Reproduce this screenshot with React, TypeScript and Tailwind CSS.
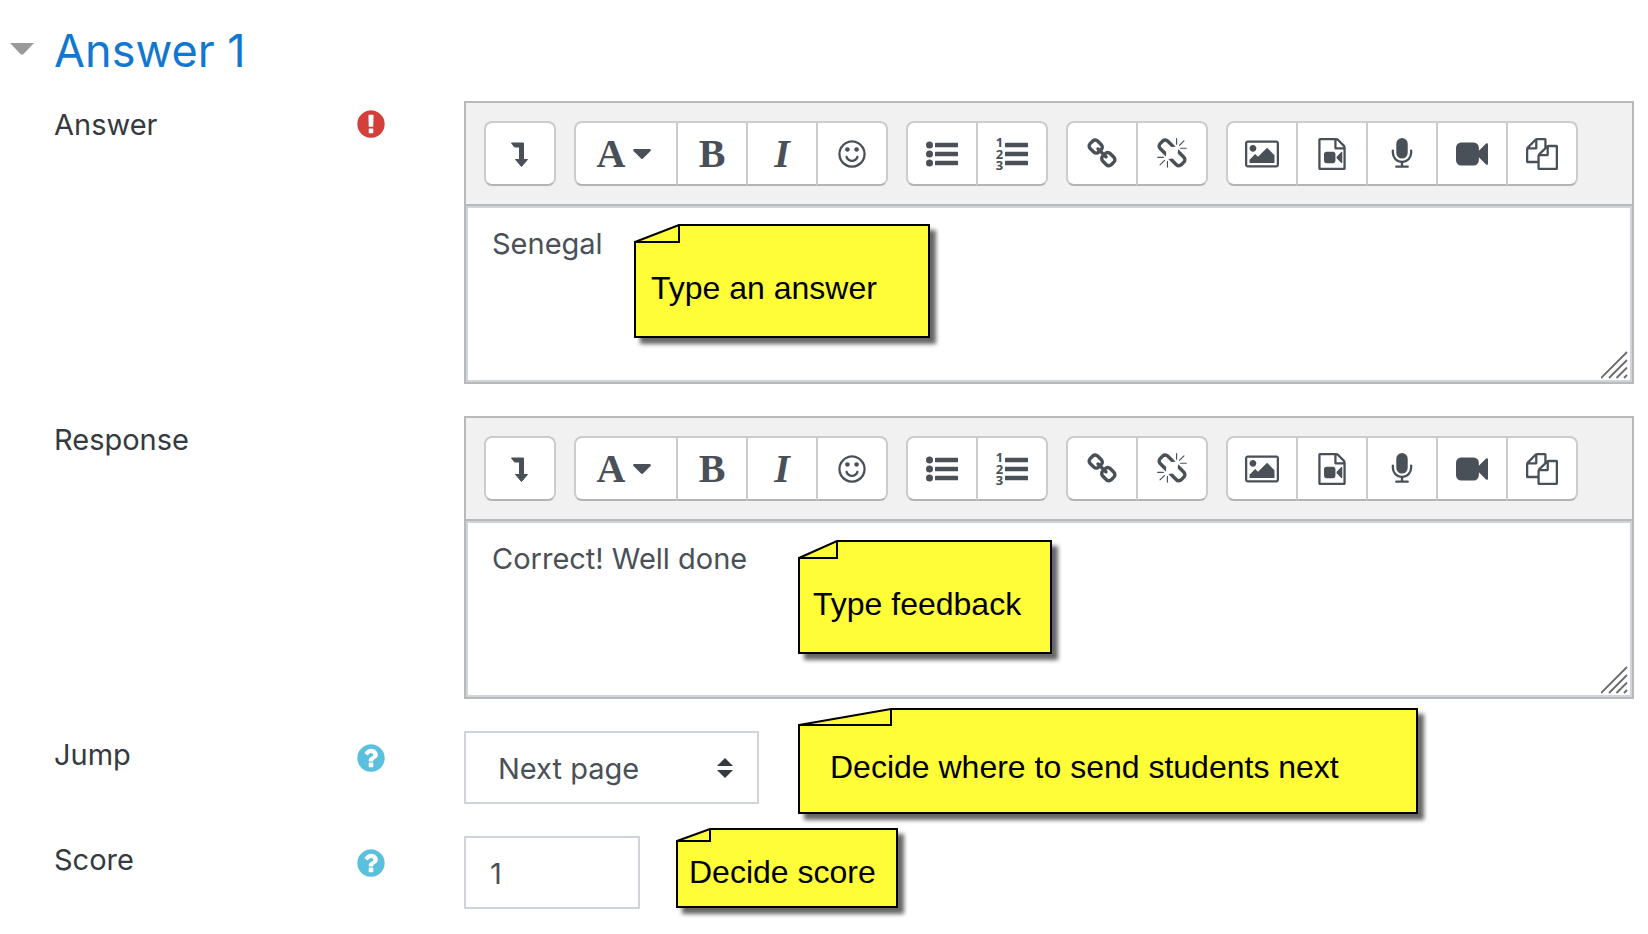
import { useState } from 'react'
import type { ReactNode } from 'react'

const ICONS = {
  smile:
    'M1262 1075q-37 121-138 195t-228 74-228-74-138-195q-8-25 4-48.500t38-31.500q25-8 48.500 4t31.500 38q25 80 92.500 129.500t151.500 49.500 151.500-49.500 92.500-129.500q8-26 32-38t49-4 37 31.500 4 48.500zm-494-435q0 53-37.500 90.500t-90.500 37.500-90.500-37.500-37.500-90.500 37.500-90.500 90.500-37.500 90.500 37.500 37.500 90.500zm512 0q0 53-37.500 90.500t-90.500 37.500-90.500-37.500-37.500-90.500 37.500-90.500 90.500-37.500 90.500 37.500 37.500 90.500zm256 256q0-130-51-248.500t-136.500-204-204-136.500-248.500-51-248.500 51-204 136.500-136.500 204-51 248.500 51 248.500 136.500 204 204 136.500 248.500 51 248.500-51 204-136.500 136.500-204 51-248.500zm128 0q0 209-103 385.500t-279.500 279.500-385.500 103-385.500-103-279.500-279.500-103-385.500 103-385.500 279.500-279.500 385.500-103 385.500 103 279.500 279.500 103 385.500z',
  link: 'M1520 1216q0-40-28-68l-208-208q-28-28-68-28-42 0-72 32 3 3 19 18.500t21.500 21.500 15 19 13 25.500 3.500 27.500q0 40-28 68t-68 28q-15 0-27.500-3.500t-25.500-13-19-15-21.500-21.500-18.500-19q-33 31-33 73 0 40 28 68l206 207q27 27 68 27 40 0 68-26l147-146q28-28 28-67zm-703-705q0-40-28-68l-206-207q-28-28-68-28-39 0-68 27l-147 146q-28 28-28 67 0 40 28 68l208 208q27 27 68 27 42 0 72-31-3-3-19-18.500t-21.500-21.500-15-19-13-25.500-3.500-27.500q0-40 28-68t68-28q15 0 27.500 3.500t25.500 13 19 15 21.500 21.500 18.500 19q33-31 33-73zm895 705q0 120-85 203l-147 146q-83 83-203 83-121 0-204-85l-206-207q-83-83-83-203 0-123 88-209l-88-88q-86 88-208 88-120 0-204-84l-208-208q-84-84-84-204t85-203l147-146q83-83 203-83 121 0 204 85l206 207q83 83 83 203 0 123-88 209l88 88q86-88 208-88 120 0 204 84l208 208q84 84 84 204z',
  unlink:
    'M503 1271l-256 256q-10 9-23 9-12 0-23-9-9-10-9-23t9-23l256-256q10-9 23-9t23 9q9 10 9 23t-9 23zm169 41v320q0 14-9 23t-23 9-23-9-9-23v-320q0-14 9-23t23-9 23 9 9 23zm-224-224q0 14-9 23t-23 9h-320q-14 0-23-9t-9-23 9-23 23-9h320q14 0 23 9t9 23zm1264 128q0 120-85 203l-147 146q-83 83-203 83-121 0-204-85l-334-335q-21-21-42-56l239-18 273 274q28 28 68 27.500t68-27.500l147-146q28-28 28-67 0-40-28-68l-274-275 18-239q35 21 56 42l336 336q84 86 84 204zm-617-724l-239 18-273-274q-28-28-68-28-39 0-68 27l-147 146q-28 28-28 67 0 40 28 68l274 274-18 240q-35-21-56-42l-336-336q-84-86-84-204 0-120 85-203l147-146q83-83 203-83 121 0 204 85l334 335q21 21 42 56zm633 84q0 14-9 23t-23 9h-320q-14 0-23-9t-9-23 9-23 23-9h320q14 0 23 9t9 23zm-544-544v320q0 14-9 23t-23 9-23-9-9-23v-320q0-14 9-23t23-9 23 9 9 23zm407 151l-256 256q-11 9-23 9t-23-9q-9-10-9-23t9-23l256-256q10-9 23-9t23 9q9 10 9 23t-9 23z',
  fileVideo:
    'M1596 380q28 28 48 76t20 88v1152q0 40-28 68t-68 28h-1344q-40 0-68-28t-28-68v-1600q0-40 28-68t68-28h896q40 0 88 20t76 48zm-444-244v376h376q-10-29-22-41l-313-313q-12-12-41-22zm384 1528v-1024h-416q-40 0-68-28t-28-68v-416h-768v1536h1280zm-576-896q52 0 90 38t38 90v384q0 52-38 90t-90 38h-384q-52 0-90-38t-38-90v-384q0-52 38-90t90-38h384zm492 2q20 8 20 30v576q0 22-20 30-8 2-12 2-14 0-23-9l-265-266v-90l265-266q9-9 23-9 4 0 12 2z',
  microphone:
    'M1472 704v128q0 221-147.500 384.500t-364.500 187.500v132h256q26 0 45 19t19 45-19 45-45 19h-640q-26 0-45-19t-19-45 19-45 45-19h256v-132q-217-24-364.500-187.500t-147.500-384.500v-128q0-26 19-45t45-19 45 19 19 45v128q0 185 131.500 316.500t316.500 131.500 316.500-131.500 131.500-316.500v-128q0-26 19-45t45-19 45 19 19 45zm-256-384v512q0 132-94 226t-226 94-226-94-94-226v-512q0-132 94-226t226-94 226 94 94 226z',
  video:
    'M1792 352v1088q0 42-39 59-13 5-25 5-27 0-45-19l-403-403v166q0 119-84.500 203.500t-203.500 84.500h-704q-119 0-203.500-84.500t-84.500-203.500v-704q0-119 84.500-203.500t203.500-84.500h704q119 0 203.500 84.500t84.500 203.500v165l403-402q18-19 45-19 12 0 25 5 39 17 39 59z',
  files:
    'M1696 384q40 0 68 28t28 68v1216q0 40-28 68t-68 28h-960q-40 0-68-28t-28-68v-288h-544q-40 0-68-28t-28-68v-672q0-40 20-88t48-76l408-408q28-28 76-48t88-20h416q40 0 68 28t28 68v328q68-40 128-40h416zm-544 213l-299 299h299v-299zm-640-384l-299 299h299v-299zm196 647l316-316v-416h-384v416q0 40-28 68t-68 28h-416v640h512v-256q0-40 20-88t48-76zm956 804v-1152h-384v416q0 40-28 68t-68 28h-416v640h896z',
  exclamation:
    'M896 128q209 0 385.500 103t279.500 279.500 103 385.500-103 385.500-279.500 279.500-385.500 103-385.500-103-279.500-279.500-103-385.500 103-385.500 279.500-279.500 385.500-103zm128 1247v-190q0-14-9-23.500t-22-9.500h-192q-13 0-23 10t-10 23v190q0 13 10 23t23 10h192q13 0 22-9.500t9-23.500zm-2-344l18-621q0-12-10-18-10-8-24-8h-220q-14 0-24 8-10 6-10 18l17 621q0 10 10 17.500t24 7.500h185q14 0 23.500-7.500t10.500-17.500z',
  question:
    'M1024 1376v-192q0-14-9-23t-23-9h-192q-14 0-23 9t-9 23v192q0 14 9 23t23 9h192q14 0 23-9t9-23zm256-672q0-88-55.500-163t-138.500-116-170-41q-243 0-371 213-15 24 8 42l132 100q7 6 19 6 16 0 25-12 53-68 86-92 34-24 86-24 48 0 85.500 26t37.500 59q0 38-20 61t-68 45q-63 28-115.500 86.500t-52.500 125.500v36q0 14 9 23t23 9h192q14 0 23-9t9-23q0-19 21.500-49.500t54.500-49.500q32-18 49-28.500t46-35 44.500-48 28-60.500 12.500-81zm384 192q0 209-103 385.500t-279.500 279.500-385.500 103-385.500-103-279.500-279.500-103-385.500 103-385.500 279.500-279.500 385.500-103 385.500 103 279.500 279.500 103 385.500z',
}

function Icon({ name }: { name: keyof typeof ICONS }) {
  return (
    <svg viewBox="0 0 1792 1792" className="size-8 shrink-0" fill="currentColor" aria-hidden="true">
      <path d={ICONS[name]} />
    </svg>
  )
}

function PictureIcon() {
  return (
    <svg viewBox="-64 0 1920 1792" className="h-8 w-[34px]" fill="currentColor" aria-hidden="true">
      <path d="M576 576q0 80-56 136t-136 56-136-56-56-136 56-136 136-56 136 56 56 136zm1024 384v448h-1408v-192l320-320 160 160 512-512zm96-704h-1600q-13 0-22.500 9.500t-9.500 22.500v1216q0 13 9.500 22.500t22.500 9.500h1600q13 0 22.500-9.500t9.500-22.500v-1216q0-13-9.500-22.500t-22.500-9.500zm160 32v1216q0 66-47 113t-113 47h-1600q-66 0-113-47t-47-113v-1216q0-66 47-113t113-47h1600q66 0 113 47t47 113z" />
    </svg>
  )
}

function ExpandIcon() {
  return (
    <svg viewBox="0 0 32 32" className="size-8" fill="currentColor" aria-hidden="true">
      <path
        d="M7.500 5H19.500V21.500H23.500L17.500 28.500 11.500 21.500H15.500V9H10.500Z"
        stroke="currentColor"
        strokeLinejoin="round"
      />
    </svg>
  )
}

function ListIcon({ numbered = false }: { numbered?: boolean }) {
  return (
    <svg viewBox="0 0 32 32" className="size-8 overflow-visible" fill="currentColor" aria-hidden="true">
      {[7, 16, 25].map((y) => (
        <g key={y}>
          {!numbered && <circle cx="3.500" cy={y} r="3.500" />}
          <rect x="9" y={y - 2.3} width="23" height="4.600" rx="0.500" />
        </g>
      ))}
      {numbered && (
        <text fontFamily="Noto Sans, sans-serif" fontWeight="700" fontSize="13" textAnchor="middle">
          <tspan x="3.500" y="9">1</tspan>
          <tspan x="3.500" y="20.500">2</tspan>
          <tspan x="3.500" y="32">3</tspan>
        </text>
      )}
    </svg>
  )
}

interface ToolButtonProps {
  label: string
  wide?: boolean
  children: ReactNode
}

function ToolButton({ label, wide = false, children }: ToolButtonProps) {
  return (
    <button
      type="button"
      title={label}
      aria-label={label}
      className={`flex h-[65px] items-center justify-center border-2 border-[#ccc] border-b-[#b3b3b3] bg-white text-[#495057] -ml-0.5 first:ml-0 first:rounded-l-lg last:rounded-r-lg ${
        wide ? 'w-[104px] gap-2 pr-1' : 'w-[72px]'
      }`}
    >
      {children}
    </button>
  )
}

function ToolGroup({ children }: { children: ReactNode }) {
  return <div className="flex">{children}</div>
}

function Toolbar() {
  return (
    <div className="flex flex-wrap gap-[18px] border-b-2 border-[#b8baba] bg-[#f1f1f1] p-[18px]">
      <ToolGroup>
        <ToolButton label="Show more buttons">
          <ExpandIcon />
        </ToolButton>
      </ToolGroup>
      <ToolGroup>
        <ToolButton label="Paragraph styles" wide>
          <span className="font-['Liberation_Serif',serif] text-[40px] leading-10 font-bold">A</span>
          <svg viewBox="0 0 18 10" className="h-[10px] w-[18px]" fill="currentColor" aria-hidden="true">
            <path d="M1 0H17Q18.500 .5 17.500 2L10 9.500Q9 10.300 8 9.500L.5 2Q-.5 .5 1 0Z" />
          </svg>
        </ToolButton>
        <ToolButton label="Bold">
          <span className="font-['Liberation_Serif',serif] text-[40px] leading-10 font-bold">B</span>
        </ToolButton>
        <ToolButton label="Italic">
          <span className="font-['Liberation_Serif',serif] text-[40px] leading-10 font-bold italic">I</span>
        </ToolButton>
        <ToolButton label="Emoji picker">
          <Icon name="smile" />
        </ToolButton>
      </ToolGroup>
      <ToolGroup>
        <ToolButton label="Unordered list">
          <ListIcon />
        </ToolButton>
        <ToolButton label="Ordered list">
          <ListIcon numbered />
        </ToolButton>
      </ToolGroup>
      <ToolGroup>
        <ToolButton label="Link">
          <Icon name="link" />
        </ToolButton>
        <ToolButton label="Unlink">
          <Icon name="unlink" />
        </ToolButton>
      </ToolGroup>
      <ToolGroup>
        <ToolButton label="Insert or edit image">
          <PictureIcon />
        </ToolButton>
        <ToolButton label="Insert or edit media">
          <Icon name="fileVideo" />
        </ToolButton>
        <ToolButton label="Record audio">
          <Icon name="microphone" />
        </ToolButton>
        <ToolButton label="Record video">
          <Icon name="video" />
        </ToolButton>
        <ToolButton label="Manage files">
          <Icon name="files" />
        </ToolButton>
      </ToolGroup>
    </div>
  )
}

function Editor({ id, initial }: { id: string; initial: string }) {
  const [value, setValue] = useState(initial)

  return (
    <div className="border-2 border-[#b8baba]">
      <Toolbar />
      <div className="relative">
        <textarea
          id={id}
          value={value}
          onChange={(e) => setValue(e.target.value)}
          className="block h-44 w-full resize-none border-2 border-[#ced4da] bg-white px-6 py-3 text-[29px] leading-[47px] text-[#495057] outline-none"
        />
        <svg
          viewBox="0 0 28 28"
          className="absolute right-[3px] bottom-[3px] size-7"
          stroke="#6b6b6b"
          strokeWidth="1.800"
          aria-hidden="true"
        >
          <path d="M0 27L26 1M8 27L26 9M15.500 27L26 16.500M23 27L26 24" />
        </svg>
      </div>
    </div>
  )
}

interface NoteProps {
  text: string
  width: number
  height: number
  foldX: number
  foldY: number
  className: string
}

// Sticky note with its top left corner folded over
function Note({ text, width, height, foldX, foldY, className }: NoteProps) {
  const right = width - 1
  const bottom = height - 1

  return (
    <div
      className={`absolute z-10 flex items-center font-['Liberation_Sans',sans-serif] text-[32px] leading-9 whitespace-nowrap text-black ${className}`}
      style={{ width, height }}
    >
      <svg
        viewBox={`0 0 ${width} ${height}`}
        className="absolute inset-0 size-full overflow-visible drop-shadow-[6px_6px_2px_rgba(0,0,0,0.6)]"
        fill="#fffd38"
        stroke="#000"
        strokeWidth="2"
        aria-hidden="true"
      >
        <path d={`M1 ${foldY}L${foldX} 1H${right}V${bottom}H1Z`} />
        <path d={`M1 ${foldY}H${foldX}V1`} fill="none" />
      </svg>
      <span className="relative">{text}</span>
    </div>
  )
}

interface FieldRowProps {
  id: string
  label: string
  required?: boolean
  help?: boolean
  children: ReactNode
}

function FieldRow({ id, label, required, help, children }: FieldRowProps) {
  return (
    <div className="grid grid-cols-[410px_minmax(0,1fr)]">
      <div className="flex items-start justify-between pr-[77px]">
        <label htmlFor={id} className="text-[29px] leading-[47px] text-[#343a40]">
          {label}
        </label>
        {required && (
          <span role="img" aria-label="Required" className="pt-[7px] text-[#d43f3a]">
            <Icon name="exclamation" />
          </span>
        )}
        {help && (
          <button type="button" aria-label={`Help with ${label}`} className="pt-[11px] text-[#5bc0de]">
            <Icon name="question" />
          </button>
        )}
      </div>
      <div className="relative">{children}</div>
    </div>
  )
}

export default function App() {
  const [open, setOpen] = useState(true)
  const [jump, setJump] = useState('next')
  const [score, setScore] = useState('1')

  return (
    <main className="min-h-screen bg-white pb-6 font-['Inter',sans-serif]">
      <h3 className="pt-5 pb-5 pl-[10px]">
        <button
          type="button"
          aria-expanded={open}
          onClick={() => setOpen(!open)}
          className="flex items-center gap-5 text-[45px] leading-[61px] text-[#1177d1]"
        >
          <svg viewBox="0 0 24 16" className="h-4 w-6" fill="#999" aria-hidden="true">
            <path d="M0 0H24L13.500 11Q12 12.500 10.500 11Z" />
          </svg>
          Answer 1
        </button>
      </h3>

      {open && (
        <form className="space-y-8 pr-[14px] pl-[54px]">
          <FieldRow id="answer" label="Answer" required>
            <Editor id="answer" initial="Senegal" />
            <Note
              text="Type an answer"
              width={296}
              height={114}
              foldX={45}
              foldY={18}
              className="top-[123px] left-[170px] pt-3.5 pl-[17px]"
            />
          </FieldRow>

          <FieldRow id="response" label="Response">
            <Editor id="response" initial="Correct! Well done" />
            <Note
              text="Type feedback"
              width={254}
              height={114}
              foldX={39}
              foldY={18}
              className="top-[124px] left-[334px] pt-3.5 pl-[15px]"
            />
          </FieldRow>

          <FieldRow id="jump" label="Jump" help>
            <div className="relative w-[295px]">
              <select
                id="jump"
                value={jump}
                onChange={(e) => setJump(e.target.value)}
                className="block h-[73px] w-full appearance-none border-2 border-[#ced4da] bg-white pt-0.5 pl-8 text-[29px] text-[#495057]"
              >
                <option value="next">Next page</option>
                <option value="this">This page</option>
                <option value="previous">Previous page</option>
                <option value="end">End of lesson</option>
              </select>
              <svg
                viewBox="0 0 16 20"
                className="pointer-events-none absolute top-[27px] right-[26px] h-5 w-4"
                fill="#343a40"
                aria-hidden="true"
              >
                <path d="M0 8L8 0 16 8ZM0 12H16L8 20Z" />
              </svg>
            </div>
            <Note
              text="Decide where to send students next"
              width={620}
              height={106}
              foldX={93}
              foldY={17}
              className="-top-[23px] left-[334px] pt-3 pl-8"
            />
          </FieldRow>

          <FieldRow id="score" label="Score" help>
            <input
              id="score"
              type="text"
              value={score}
              onChange={(e) => setScore(e.target.value)}
              className="block h-[73px] w-44 border-2 border-[#ced4da] bg-white px-6 pt-0.5 text-[29px] text-[#495057]"
            />
            <Note
              text="Decide score"
              width={222}
              height={80}
              foldX={34}
              foldY={13}
              className="-top-2 left-[212px] pt-2 pl-[13px]"
            />
          </FieldRow>
        </form>
      )}
    </main>
  )
}
